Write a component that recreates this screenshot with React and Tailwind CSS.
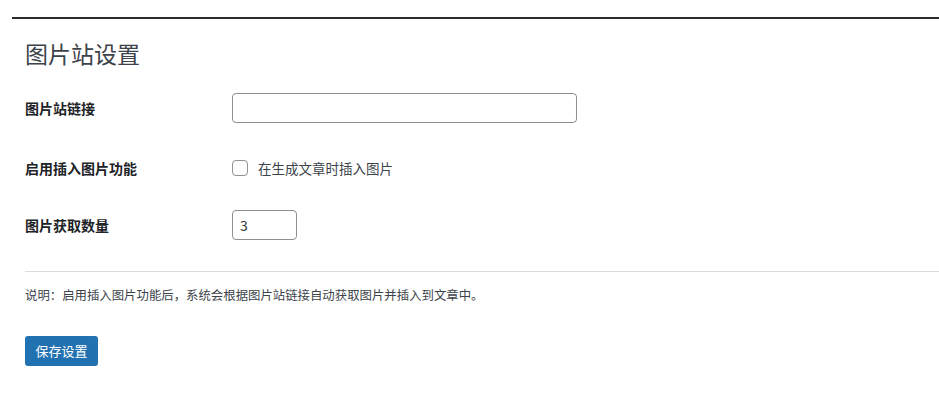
import React, { useState } from "react";

const font = { fontFamily: '"Noto Sans CJK SC", "Noto Sans", sans-serif' };

export default function App() {
  const [link, setLink] = useState("");
  const [insert, setInsert] = useState(false);
  const [count, setCount] = useState("3");

  return (
    <div className="bg-white w-full h-[416px] pl-3 pt-[17px] text-[#1d2327]" style={font}>
      <div className="h-[2px] bg-[#2c2c2c]" />
      <div className="pl-[13px]">
        <h1 className="mt-[18px] text-[23px] leading-[32px] font-normal text-[#3c434a]">图片站设置</h1>

        <div className="mt-[9px]">
          <FormRow label="图片站链接" height="h-[60px]">
            <input
              type="text"
              value={link}
              onChange={(e) => setLink(e.target.value)}
              className="w-[345px] h-[30px] border border-[#8c8f94] rounded-[4px] px-2 text-sm outline-none"
            />
          </FormRow>
          <FormRow label="启用插入图片功能" height="h-[60px]">
            <label className="flex items-center gap-[10px] text-[13.5px] text-[#3c434a]">
              <span
                onClick={() => setInsert(!insert)}
                className="w-4 h-4 border border-[#8c8f94] rounded-[4px] bg-white flex items-center justify-center"
              >
                {insert && <span className="w-2 h-2 bg-[#2271b1] rounded-sm" />}
              </span>
              在生成文章时插入图片
            </label>
          </FormRow>
          <FormRow label="图片获取数量" height="h-[54px]">
            <input
              type="text"
              value={count}
              onChange={(e) => setCount(e.target.value)}
              className="w-[65px] h-[30px] border border-[#8c8f94] rounded-[4px] pl-[7px] pr-2 text-sm text-[#2c3338] outline-none"
            />
          </FormRow>
        </div>

        <div className="mt-[19px] h-px bg-[#dcdcde]" />

        <p className="mt-[13px] text-[12.4px] leading-5 text-[#3c434a]">
          说明：启用插入图片功能后，系统会根据图片站链接自动获取图片并插入到文章中。
        </p>

        <button className="mt-[31px] w-[73px] h-[30px] bg-[#2271b1] rounded-[3px] text-white text-[13px]">
          保存设置
        </button>
      </div>
    </div>
  );
}

function FormRow({ label, height, children }) {
  return (
    <div className={`flex items-center ${height}`}>
      <div className="w-[207px] text-[14px] font-bold text-[#1d2327]">{label}</div>
      <div>{children}</div>
    </div>
  );
}
